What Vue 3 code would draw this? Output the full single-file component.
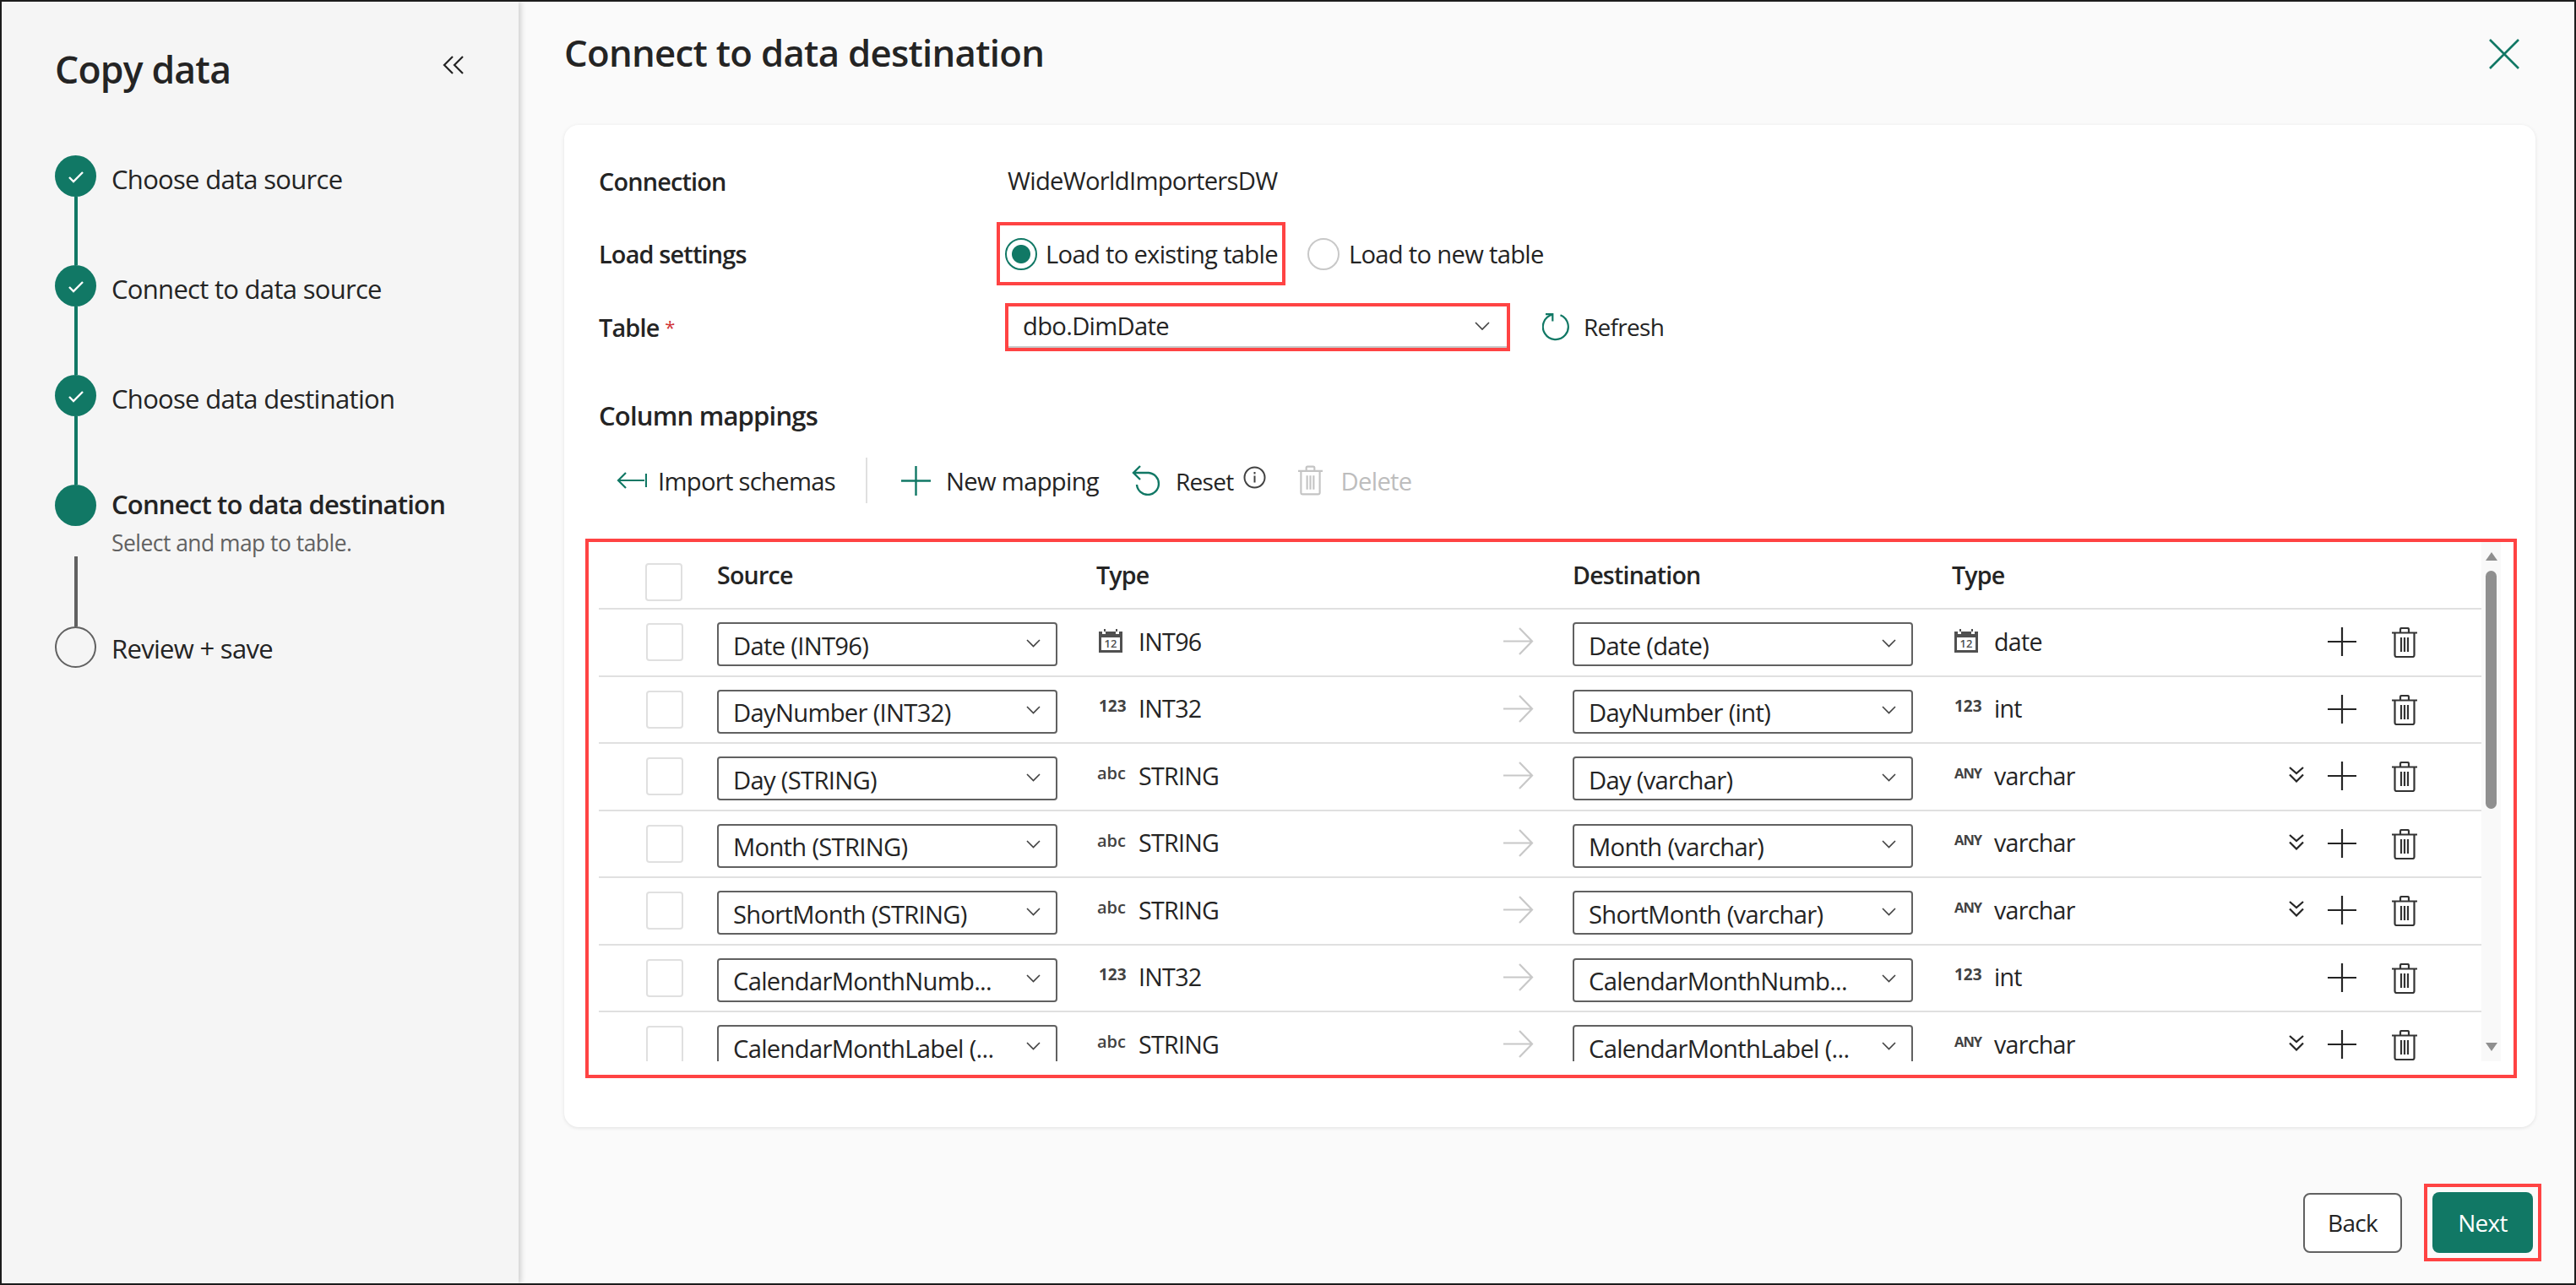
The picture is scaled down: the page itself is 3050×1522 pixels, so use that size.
<template>
  <div class="frame">
    <aside class="sidebar">
      <div class="side-head">
        <h2 class="side-title">Copy data</h2>
        <svg class="collapse" width="26" height="24" viewBox="0 0 26 24">
          <path d="M12 2 2 12l10 10M24 2 14 12l10 10" fill="none" stroke="#242424" stroke-width="2.2" />
        </svg>
      </div>
      <div class="steps">
        <div v-for="(step, i) in steps" :key="step.name" :class="['step', step.state]">
          <div class="rail">
            <span class="dot">
              <svg v-if="step.state === 'done'" width="20" height="16" viewBox="0 0 20 16">
                <path d="M2 9l5 5L18 3" fill="none" stroke="#fff" stroke-width="2.4" />
              </svg>
            </span>
            <span v-if="i < steps.length - 1" class="connector"></span>
          </div>
          <div class="step-text">
            <div class="step-name">{{ step.name }}</div>
            <div v-if="step.hint" class="step-hint">{{ step.hint }}</div>
          </div>
        </div>
      </div>
    </aside>

    <main class="main">
      <header class="main-head">
        <h1 class="main-title">Connect to data destination</h1>
        <svg class="close" width="38" height="38" viewBox="0 0 38 38">
          <path d="M2 2l34 34M36 2 2 36" fill="none" stroke="#117865" stroke-width="2.6" />
        </svg>
      </header>

      <section class="card">
        <div class="form-row">
          <div class="label">Connection</div>
          <div class="value">WideWorldImportersDW</div>
        </div>
        <div class="form-row">
          <div class="label">Load settings</div>
          <div class="radios">
            <label class="radio-mark">
              <span class="radio on"></span>
              <span>Load to existing table</span>
            </label>
            <label class="radio-plain">
              <span class="radio"></span>
              <span>Load to new table</span>
            </label>
          </div>
        </div>
        <div class="form-row">
          <div class="label">Table <span class="req">*</span></div>
          <div class="table-line">
            <div class="table-mark">
              <div class="table-select">
                <span>dbo.DimDate</span>
                <svg width="18" height="11" viewBox="0 0 18 11"><path d="M1 1l8 8 8-8" fill="none" stroke="#424242" stroke-width="1.6" /></svg>
              </div>
            </div>
            <div class="refresh">
              <svg width="34" height="33" viewBox="0 0 34 33">
                <path d="M21.500 2.200A15 15 0 1 1 12.300 1.500" fill="none" stroke="#117865" stroke-width="2.200" />
                <path d="M4 1.200H12.300V9.500" fill="none" stroke="#117865" stroke-width="2.200" />
              </svg>
              <span>Refresh</span>
            </div>
          </div>
        </div>

        <h3 class="map-title">Column mappings</h3>

        <div class="toolbar">
          <svg class="t-import" width="36" height="22" viewBox="0 0 36 22">
            <path d="M11 2 2 11l9 9M2 11h31M35 3v16" fill="none" stroke="#117865" stroke-width="2.2" />
          </svg>
          <span class="t-text">Import schemas</span>
          <span class="t-divider"></span>
          <svg class="t-plus" width="35" height="35" viewBox="0 0 35 35">
            <path d="M17.5 0v35M0 17.5h35" fill="none" stroke="#117865" stroke-width="2.4" />
          </svg>
          <span class="t-text">New mapping</span>
          <svg class="t-reset" width="34" height="36" viewBox="0 0 34 36">
            <path d="M10 1 2 9l8 8M2 9h18a13 13 0 1 1-14 14" fill="none" stroke="#117865" stroke-width="2.4" />
          </svg>
          <span class="t-text t-small">Reset</span>
          <svg class="t-info" width="27" height="27" viewBox="0 0 27 27">
            <circle cx="13.5" cy="13.5" r="12" fill="none" stroke="#424242" stroke-width="2" />
            <path d="M13.5 11.5v8M13.5 7v2.4" fill="none" stroke="#424242" stroke-width="2" />
          </svg>
          <svg class="t-trash" width="29" height="36" viewBox="0 0 30 36">
            <path d="M0 6.5h30M10 6V2.5A1.5 1.5 0 0 1 11.5 1h7A1.5 1.5 0 0 1 20 2.5V6M3.5 6.5V33a2 2 0 0 0 2 2h19a2 2 0 0 0 2-2V6.5M11 12v17M15 12v17M19 12v17" fill="none" stroke="#c4c4c4" stroke-width="2.2" />
          </svg>
          <span class="t-text t-off">Delete</span>
        </div>

        <div class="map-box">
          <div class="map-scroll">
            <div class="map-row map-header">
              <div><span class="check head-check"></span></div>
              <div>Source</div>
              <div>Type</div>
              <div></div>
              <div>Destination</div>
              <div>Type</div>
              <div></div>
            </div>
            <div v-for="row in rows" :key="row.src" class="map-row">
              <div><span class="check"></span></div>
              <div class="select">
                <span>{{ row.src }}</span>
                <svg width="17" height="10" viewBox="0 0 17 10"><path d="M1 1l7.5 7.5L16 1" fill="none" stroke="#424242" stroke-width="1.6" /></svg>
              </div>
              <div class="type-cell">
                <span class="type-icon">
                  <svg v-if="row.srcIcon === 'cal'" width="28" height="28" viewBox="0 0 28 28">
                    <path d="M0 3h4v3h4V3h12v3h4V3h4v25H0z" fill="#505050" />
                    <rect x="3" y="10" width="22" height="15" fill="#fff" />
                    <rect x="6" y="0" width="2" height="3" fill="#505050" />
                    <rect x="20" y="0" width="2" height="3" fill="#505050" />
                    <text x="14" y="22" class="cal-num" text-anchor="middle">12</text>
                  </svg>
                  <span v-else :class="['glyph', row.srcIcon === 'abc' ? 'g-abc' : 'g-num']">{{ row.srcIcon }}</span>
                </span>
                <span>{{ row.srcType }}</span>
              </div>
              <div class="arrow-cell">
                <svg width="36" height="33" viewBox="0 0 36 33"><path d="M19 1l15 15.500L19 32M0 16.500h34" fill="none" stroke="#c8c8c8" stroke-width="2.2" /></svg>
              </div>
              <div class="select">
                <span>{{ row.dst }}</span>
                <svg width="17" height="10" viewBox="0 0 17 10"><path d="M1 1l7.5 7.5L16 1" fill="none" stroke="#424242" stroke-width="1.6" /></svg>
              </div>
              <div class="type-cell">
                <span class="type-icon">
                  <svg v-if="row.dstIcon === 'cal'" width="28" height="28" viewBox="0 0 28 28">
                    <path d="M0 3h4v3h4V3h12v3h4V3h4v25H0z" fill="#505050" />
                    <rect x="3" y="10" width="22" height="15" fill="#fff" />
                    <rect x="6" y="0" width="2" height="3" fill="#505050" />
                    <rect x="20" y="0" width="2" height="3" fill="#505050" />
                    <text x="14" y="22" class="cal-num" text-anchor="middle">12</text>
                  </svg>
                  <span v-else :class="['glyph', row.dstIcon === 'ANY' ? 'g-any' : 'g-num']">{{ row.dstIcon }}</span>
                </span>
                <span>{{ row.dstType }}</span>
              </div>
              <div class="row-actions">
                <span class="a-more">
                  <svg v-if="row.more" width="18" height="20" viewBox="0 0 18 20">
                    <path d="M1 2l8 7 8-7M1 10.500l8 8 8-8" fill="none" stroke="#242424" stroke-width="2.2" />
                  </svg>
                </span>
                <svg class="a-plus" width="34" height="34" viewBox="0 0 34 34">
                  <path d="M17 0v34M0 17h34" fill="none" stroke="#242424" stroke-width="2.2" />
                </svg>
                <svg class="a-trash" width="30" height="36" viewBox="0 0 30 36">
                  <path d="M0 6.500h30M10 6V2.500A1.500 1.500 0 0 1 11.500 1h7A1.500 1.500 0 0 1 20 2.500V6M3.500 6.500V33a2 2 0 0 0 2 2h19a2 2 0 0 0 2-2V6.500M11 12v17M15 12v17M19 12v17" fill="none" stroke="#333" stroke-width="2.200" />
                </svg>
              </div>
            </div>
          </div>
          <div class="scrollbar">
            <span class="tri up"></span>
            <span class="thumb"></span>
            <span class="tri down"></span>
          </div>
        </div>
      </section>

      <footer class="footer">
        <button class="btn">Back</button>
        <div class="next-mark">
          <button class="btn primary">Next</button>
        </div>
      </footer>
    </main>
  </div>
</template>

<script setup>
const steps = [
  { name: 'Choose data source', state: 'done' },
  { name: 'Connect to data source', state: 'done' },
  { name: 'Choose data destination', state: 'done' },
  { name: 'Connect to data destination', hint: 'Select and map to table.', state: 'active' },
  { name: 'Review + save', state: 'todo' }
]

const rows = [
  { src: 'Date (INT96)', srcIcon: 'cal', srcType: 'INT96', dst: 'Date (date)', dstIcon: 'cal', dstType: 'date', more: false },
  { src: 'DayNumber (INT32)', srcIcon: '123', srcType: 'INT32', dst: 'DayNumber (int)', dstIcon: '123', dstType: 'int', more: false },
  { src: 'Day (STRING)', srcIcon: 'abc', srcType: 'STRING', dst: 'Day (varchar)', dstIcon: 'ANY', dstType: 'varchar', more: true },
  { src: 'Month (STRING)', srcIcon: 'abc', srcType: 'STRING', dst: 'Month (varchar)', dstIcon: 'ANY', dstType: 'varchar', more: true },
  { src: 'ShortMonth (STRING)', srcIcon: 'abc', srcType: 'STRING', dst: 'ShortMonth (varchar)', dstIcon: 'ANY', dstType: 'varchar', more: true },
  { src: 'CalendarMonthNumb...', srcIcon: '123', srcType: 'INT32', dst: 'CalendarMonthNumb...', dstIcon: '123', dstType: 'int', more: false },
  { src: 'CalendarMonthLabel (...', srcIcon: 'abc', srcType: 'STRING', dst: 'CalendarMonthLabel (...', dstIcon: 'ANY', dstType: 'varchar', more: true }
]
</script>

<style>
html, body { margin: 0; padding: 0; background: #fafafa; }
</style>

<style scoped>
.frame {
  box-sizing: border-box;
  width: 3050px;
  height: 1522px;
  display: flex;
  border: 2px solid #1c1c1c;
  overflow: hidden;
  font-family: "Open Sans", "Noto Sans", sans-serif;
  font-size: 29.2px;
  letter-spacing: -0.7px;
  color: #242424;
  background: #fafafa;
}

/* left steps */
.sidebar {
  flex: 0 0 612px;
  box-sizing: border-box;
  padding-left: 63px;
  background: #f5f5f5;
  box-shadow: 3px 0 6px rgba(0, 0, 0, 0.16);
  position: relative;
}
.side-head { display: flex; justify-content: space-between; align-items: center; height: 56px; margin-top: 52px; padding-right: 64px; }
.side-title { margin: 0; font-size: 44.5px; font-weight: 600; letter-spacing: -0.8px; line-height: 56px; }
.collapse { margin-top: -10px; }
.steps { margin-top: 74px; }
.step { display: flex; height: 130px; }
.step.active { height: 168px; }
.step.todo { height: 60px; }
.rail { width: 49px; display: flex; flex-direction: column; align-items: center; }
.dot { flex: none; box-sizing: border-box; width: 49px; height: 49px; border-radius: 50%; background: #117865; display: flex; align-items: center; justify-content: center; }
.connector { flex: 1; width: 4px; background: #117865; }
.active .connector { background: #616161; margin-top: 36px; }
.todo .dot { background: #f5f5f5; border: 2px solid #616161; }
.step-text { margin-left: 18px; padding-top: 8px; font-size: 31px; }
.step-name { line-height: 40px; white-space: nowrap; }
.active .step-text { padding-top: 3px; }
.todo .step-text { padding-top: 6px; }
.active .step-name { font-weight: 600; letter-spacing: -0.8px; }
.step-hint { font-size: 26.4px; color: #616161; line-height: 32px; margin-top: 10px; letter-spacing: -0.5px; }

/* right side */
.main { flex: 1; min-width: 0; box-sizing: border-box; padding: 0 46px 0 54px; }
.main-head { display: flex; justify-content: space-between; align-items: center; height: 146px; padding-bottom: 16px; box-sizing: border-box; }
.main-title { margin: 0; font-size: 43.7px; font-weight: 600; letter-spacing: -0.7px; line-height: 56px; margin-top: -10px; }
.close { margin-top: -6px; position: relative; left: -18px; }
.card {
  box-sizing: border-box;
  height: 1187px;
  padding: 23px 22px 0 41px;
  background: #fff;
  border-radius: 17px;
  box-shadow: 0 1px 4px rgba(0, 0, 0, 0.1);
}
.form-row { display: grid; grid-template-columns: 481px 1fr; align-items: center; height: 86.5px; }
.label { font-size: 28.8px; font-weight: 600; letter-spacing: -0.8px; }
.req { color: #d13438; font-weight: 400; font-size: 22px; vertical-align: 3px; }
.value { padding-left: 3px; }
.radios { display: flex; align-items: center; }
.radio-mark { display: flex; align-items: center; gap: 10px; box-sizing: border-box; height: 75px; padding: 0 5px 0 6px; margin-left: -10px; border: 4px solid #ff4343; }
.radio-plain { display: flex; align-items: center; gap: 11px; margin-left: 26px; }
.radio { box-sizing: border-box; width: 38px; height: 38px; border-radius: 50%; border: 2px solid #c8c8c8; display: block; position: relative; background: #fff; }
.radio.on { border-color: #117865; background: radial-gradient(circle, #117865 0 10.5px, #fff 11.5px); }
.table-line { display: flex; align-items: center; }
.table-mark { box-sizing: border-box; width: 598px; height: 57px; border: 4px solid #ff4343; }
.table-select { box-sizing: border-box; height: 49px; display: flex; align-items: center; justify-content: space-between; padding: 0 20px 0 17px; border-bottom: 2px solid #c8c8c8; }
.refresh { display: flex; align-items: center; gap: 15px; margin-left: 38px; font-size: 28px; }
.map-title { margin: 41.5px 0 0; font-size: 31px; font-weight: 600; letter-spacing: -0.8px; line-height: 40px; }

.toolbar { display: flex; align-items: center; height: 54px; margin-top: 30px; padding-left: 21px; }
.t-text { white-space: nowrap; padding-top: 2px; }
.t-small { font-size: 28px; }
.t-import { margin-right: 13px; }
.t-divider { width: 2px; height: 54px; background: #e0e0e0; margin: 0 40px 0 36px; }
.t-plus { margin-right: 18px; }
.t-reset { margin-left: 39px; margin-right: 18px; }
.t-info { margin-left: 11px; margin-top: -8px; }
.t-trash { margin-left: 38px; margin-right: 22px; }
.t-off { color: #bdbdbd; }

.map-box {
  box-sizing: border-box;
  height: 639px;
  margin: 42px 0 0 -16px;
  margin-right: 0;
  border: 4px solid #ff4343;
  padding: 0 15px 16px 12px;
  display: flex;
}
.map-scroll { flex: 1; min-width: 0; overflow: hidden; }
.map-row {
  display: grid;
  grid-template-columns: 140px 449px 482px 82px 449px 389px 1fr;
  align-items: start;
  box-sizing: border-box;
  height: 79.5px;
  border-bottom: 2px solid #e0e0e0;
}
.map-header { height: 80px; font-size: 28.6px; font-weight: 600; letter-spacing: -0.8px; line-height: 40px; }
.map-header > div { padding-top: 19px; }
.map-header > div:first-child { padding-top: 0; }
.check { display: block; box-sizing: border-box; width: 44px; height: 45px; margin: 16px 0 0 56px; border: 2px solid #e0e0e0; border-radius: 4px; background: #fff; }
.head-check { margin-top: 25px; margin-left: 55px; }
.select {
  box-sizing: border-box;
  width: 403px;
  height: 52px;
  margin-top: 15px;
  padding: 3px 18px 0 17px;
  display: flex;
  align-items: center;
  justify-content: space-between;
  border: 2px solid #616161;
  border-radius: 4px;
  background: #fff;
  white-space: nowrap;
  line-height: 26px;
}
.select svg { flex: none; margin-top: -6px; }
.type-cell { display: flex; align-items: center; height: 40px; margin-top: 17px; white-space: nowrap; font-size: 28.6px; }
.type-icon { width: 50px; padding-left: 3px; box-sizing: border-box; flex: none; display: flex; align-items: center; }
.glyph { color: #424242; line-height: 1; letter-spacing: 0; margin-top: -4px; }
.g-num { font-size: 19px; font-weight: 700; }
.g-abc { font-size: 20px; font-weight: 600; margin-left: -2px; }
.g-any { font-size: 16.5px; font-weight: 700; margin-left: 0; letter-spacing: -1px; }
.cal-num { font-family: "Open Sans", sans-serif; font-size: 13px; font-weight: 600; fill: #505050; letter-spacing: 0; }
.arrow-cell { height: 33px; margin-top: 21px; }
.arrow-cell svg { display: block; }
.row-actions { display: flex; align-items: center; height: 36px; margin-top: 21px; padding-left: 10px; }
.a-more { width: 18px; height: 20px; display: block; margin-top: -6px; }
.a-more svg { display: block; }
.a-plus { margin-left: 28px; margin-top: -2px; }
.a-trash { margin-left: 42px; }

.scrollbar { flex: 0 0 23px; background: #f9f9f9; display: flex; flex-direction: column; align-items: center; padding-top: 12px; box-sizing: border-box; }
.thumb { width: 13px; height: 282px; margin-top: 12px; background: #8f8f8f; border-radius: 7px; }
.tri { width: 0; height: 0; border-left: 7px solid transparent; border-right: 7px solid transparent; }
.tri.up { border-bottom: 10px solid #8f8f8f; }
.tri.down { border-top: 10px solid #8f8f8f; margin-top: auto; margin-bottom: 12px; }

.footer { display: flex; justify-content: flex-end; align-items: center; height: 92px; margin-top: 67px; margin-right: -7px; }
.btn {
  box-sizing: border-box;
  width: 117px;
  height: 71px;
  font: inherit;
  font-size: 28px;
  letter-spacing: -0.7px;
  color: #242424;
  background: #fff;
  border: 2px solid #616161;
  border-radius: 8px;
}
.next-mark { box-sizing: border-box; width: 139px; height: 92px; margin-left: 26px; padding: 6px; border: 4px solid #ff4343; }
.btn.primary { width: 119px; height: 72px; color: #fff; background: #117865; border: none; }
</style>
